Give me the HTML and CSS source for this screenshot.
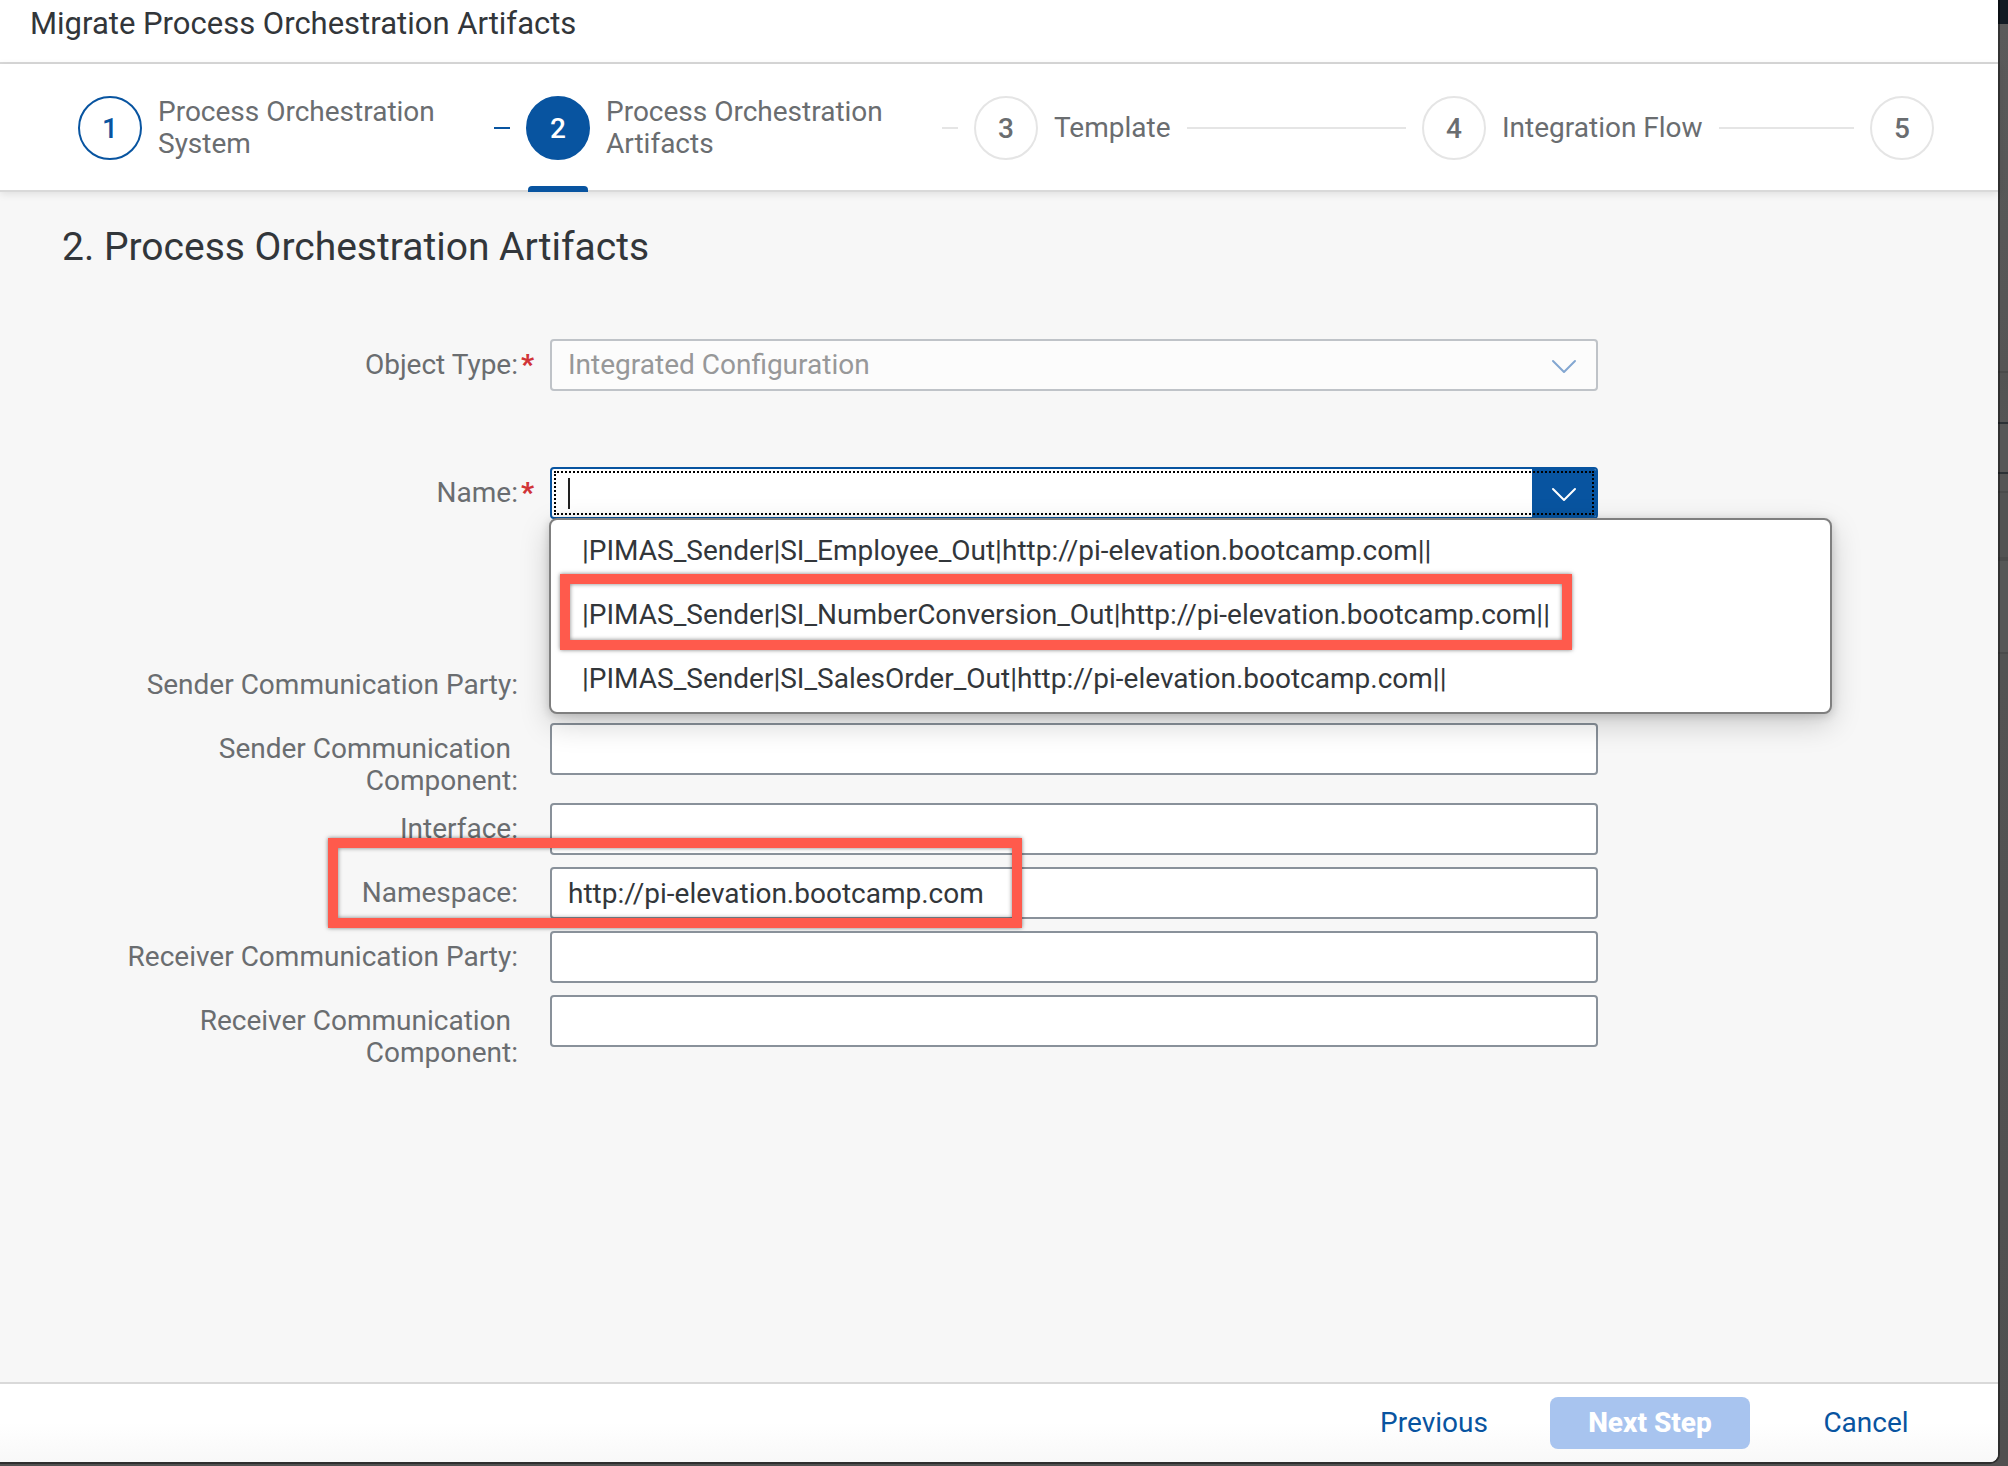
FILE: index.html
```html
<!DOCTYPE html>
<html lang="en">
<head>
<meta charset="utf-8">
<title>Migrate Process Orchestration Artifacts</title>
<link rel="stylesheet" href="styles.css">
</head>
<body>
<div class="dialog" role="dialog" aria-labelledby="dialog-title">
  <header class="dialog-header">
    <h1 class="dialog-title" id="dialog-title">Migrate Process Orchestration Artifacts</h1>
  </header>

  <nav class="wizard-nav" aria-label="Wizard steps">
    <ol class="steps">
      <li class="step done">
        <button class="step-button" type="button"><span class="circle">1</span><span class="step-label">Process Orchestration System</span></button>
        <span class="line"></span>
      </li>
      <li class="step current" aria-current="step">
        <button class="step-button" type="button"><span class="circle">2</span><span class="step-label">Process Orchestration Artifacts</span></button>
        <span class="line"></span>
      </li>
      <li class="step">
        <button class="step-button" type="button"><span class="circle">3</span><span class="step-label">Template</span></button>
        <span class="line"></span>
      </li>
      <li class="step">
        <button class="step-button" type="button"><span class="circle">4</span><span class="step-label">Integration Flow</span></button>
        <span class="line"></span>
      </li>
      <li class="step last">
        <button class="step-button" type="button"><span class="circle">5</span></button>
      </li>
    </ol>
  </nav>

  <main class="content">
    <h2 class="section-title">2. Process Orchestration Artifacts</h2>
    <form class="form" id="artifact-form">
      <div class="row row-type">
        <label class="label required" for="object-type">Object Type:</label>
        <div class="field">
          <select class="input select" id="object-type" disabled>
            <option>Integrated Configuration</option>
          </select>
          <svg class="select-arrow" width="26" height="16" viewBox="0 0 26 16" aria-hidden="true"><path d="M2 2L13 13L24 2" fill="none" stroke="#83a7d1" stroke-width="2" stroke-linecap="round" stroke-linejoin="round"/></svg>
        </div>
      </div>

      <div class="row row-name">
        <label class="label required" for="name">Name:</label>
        <div class="field">
          <div class="combobox">
            <input class="combobox-input" id="name" type="text" role="combobox" aria-expanded="true" aria-controls="name-list">
            <span class="caret"></span>
            <button class="combobox-button" type="button" aria-label="Show options">
              <svg width="26" height="16" viewBox="0 0 26 16" aria-hidden="true"><path d="M2 2L13 13L24 2" fill="none" stroke="#fff" stroke-width="2" stroke-linecap="round" stroke-linejoin="round"/></svg>
            </button>
          </div>
          <ul class="popover" id="name-list" role="listbox" aria-label="Name">
            <li class="option" role="option">|PIMAS_Sender|SI_Employee_Out|http://pi-elevation.bootcamp.com||</li>
            <li class="option" role="option">|PIMAS_Sender|SI_NumberConversion_Out|http://pi-elevation.bootcamp.com||<span class="mark mark-option"></span></li>
            <li class="option" role="option">|PIMAS_Sender|SI_SalesOrder_Out|http://pi-elevation.bootcamp.com||</li>
          </ul>
        </div>
      </div>

      <div class="row">
        <label class="label" for="sender-party">Sender Communication Party:</label>
        <div class="field"><input class="input" id="sender-party" type="text"></div>
      </div>
      <div class="row">
        <label class="label" for="sender-component">Sender Communication&nbsp;<br>Component:</label>
        <div class="field"><input class="input" id="sender-component" type="text"></div>
      </div>
      <div class="row">
        <label class="label" for="interface">Interface:</label>
        <div class="field"><input class="input" id="interface" type="text"></div>
      </div>
      <div class="row">
        <label class="label" for="namespace">Namespace:</label>
        <div class="field"><input class="input" id="namespace" type="text" value="http://pi-elevation.bootcamp.com"></div>
        <span class="mark mark-namespace"></span>
      </div>
      <div class="row">
        <label class="label" for="receiver-party">Receiver Communication Party:</label>
        <div class="field"><input class="input" id="receiver-party" type="text"></div>
      </div>
      <div class="row">
        <label class="label" for="receiver-component">Receiver Communication&nbsp;<br>Component:</label>
        <div class="field"><input class="input" id="receiver-component" type="text"></div>
      </div>
    </form>
  </main>

  <footer class="dialog-footer">
    <button class="button" type="button">Previous</button>
    <button class="button primary" type="submit" form="artifact-form" disabled>Next Step</button>
    <button class="button" type="button">Cancel</button>
  </footer>
</div>
</body>
</html>
```
FILE: styles.css
```css
:root {
  --blue: #0854a0;
  --text: #32363a;
  --label: #6a6d70;
  --rule: #d9d9d9;
  --mark: #ff5a4c;
}

* {
  box-sizing: border-box;
}

/* Dimmed application page behind the dialog */
body {
  margin: 0;
  background-color: #575757;
  background-image: linear-gradient(
    #121b24 24px, #5a5a5a 24px, #555 371px,
    #4a4a4a 371px, #4a4a4a 373px, #535353 373px, #555 422px,
    #2c3135 422px, #2c3135 424px, #575757 424px, #575757 472px,
    #2c3135 472px, #2c3135 474px, #555 474px, #555 491px,
    #4b4b4b 491px, #4b4b4b 493px, #535353 493px, #535353 557px,
    #4c4c4c 557px, #4c4c4c 561px, #575757 561px, #575757 652px,
    #4b4b4b 652px, #4b4b4b 654px, #535353 654px, #505050);
  color: var(--text);
  font-family: Roboto, "Open Sans", sans-serif;
  font-size: 28px;
  line-height: 32px;
}

button,
input,
select {
  font: inherit;
  color: inherit;
}

.dialog {
  display: flex;
  flex-direction: column;
  min-height: calc(100vh - 4px);
  margin: 0 10px 4px 0;
  background: #f7f7f7;
  border-radius: 0 0 8px 0;
  box-shadow: 0 0 0 2px rgba(0, 0, 0, 0.42);
}

.dialog-header {
  padding: 8px 30px 22px;
  background: #fff;
  border-bottom: 2px solid var(--rule);
}

.dialog-title {
  margin: 0;
  font-size: 31px;
  font-weight: 400;
  line-height: 32px;
}

/* Wizard progress */
.wizard-nav {
  padding: 32px 64px 30px 78px;
  background: #fff;
  border-bottom: 2px solid var(--rule);
  box-shadow: 0 2px 8px rgba(0, 0, 0, 0.1);
}

.steps {
  display: flex;
  margin: 0;
  padding: 0;
  list-style: none;
}

.step {
  display: flex;
  flex: 1 1 0;
  gap: 16px;
  align-items: center;
  min-width: 0;
  padding-right: 16px;
  color: var(--label);
}

.step.last {
  flex: none;
  padding-right: 0;
}

.step-button {
  display: flex;
  gap: 16px;
  align-items: center;
  min-width: 0;
  padding: 0;
  border: 0;
  background: none;
  text-align: left;
}

.circle {
  position: relative;
  display: flex;
  flex: none;
  align-items: center;
  justify-content: center;
  width: 64px;
  height: 64px;
  padding-top: 2px;
  border: 2px solid #e5e5e5;
  border-radius: 50%;
  font-weight: 500;
}

.done .circle {
  border-color: var(--blue);
  color: var(--blue);
}

.current .circle {
  border-color: var(--blue);
  background: var(--blue);
  color: #fff;
}

.current .circle::after {
  content: "";
  position: absolute;
  bottom: -34px;
  left: 0;
  width: 60px;
  height: 6px;
  border-radius: 4px 4px 0 0;
  background: var(--blue);
}

.line {
  flex: 1 0 16px;
  height: 2px;
  background: #e5e5e5;
}

.done .line {
  background: var(--blue);
}

/* Form */
.content {
  flex: 1;
  padding: 31px 62px 32px;
}

.section-title {
  margin: 0 0 62px;
  font-size: 39px;
  font-weight: 400;
  line-height: 48px;
}

.row {
  position: relative;
  display: grid;
  grid-template-columns: 488fr 1048fr 338fr;
  align-items: start;
  padding-top: 6px;
}

.row-type {
  margin-bottom: 64px;
}

.row-name {
  z-index: 1;
  margin-bottom: 128px;
}

.label {
  padding: 10px 32px 0 0;
  color: var(--label);
  text-align: right;
}

.label.required {
  padding-right: 16px;
}

.label.required::after {
  content: "*";
  display: inline-block;
  width: 16px;
  color: #d13438;
  font-weight: 900;
  text-align: right;
}

.field {
  position: relative;
  padding-bottom: 6px;
}

.input {
  display: block;
  width: 100%;
  height: 52px;
  padding: 0 16px;
  border: 2px solid #89919a;
  border-radius: 4px;
  background: #fff;
}

.select {
  appearance: none;
  border-color: #bfc3c8;
  background: #fcfcfc;
  color: #979899;
  opacity: 1;
}

.select-arrow {
  position: absolute;
  top: 20px;
  right: 21px;
}

.combobox {
  position: relative;
  display: flex;
  height: 52px;
  overflow: hidden;
  border: 2px solid var(--blue);
  border-radius: 4px;
  background: #fff;
}

.combobox::after {
  content: "";
  position: absolute;
  inset: 2px;
  border: 2px dotted #000;
  pointer-events: none;
}

.combobox-input {
  flex: 1;
  min-width: 0;
  padding: 0 16px;
  border: 0;
  outline: 0;
  background: none;
}

.combobox-button {
  display: flex;
  align-items: center;
  justify-content: center;
  width: 64px;
  padding: 4px 0 0;
  border: 0;
  background: var(--blue);
}

.caret {
  position: absolute;
  top: 9px;
  left: 16px;
  width: 2px;
  height: 31px;
  background: #222;
}

.popover {
  position: absolute;
  top: 51px;
  left: -1px;
  width: calc(100% + 235px);
  margin: 0;
  padding: 0;
  border: 2px solid #7f7f7f;
  border-radius: 8px;
  background: #fff;
  box-shadow: 0 10px 30px rgba(0, 0, 0, 0.18), 0 2px 10px rgba(0, 0, 0, 0.16);
  list-style: none;
}

.option {
  position: relative;
  padding: 15px 31px 17px;
  white-space: nowrap;
}

/* Red callout frames */
.mark {
  position: absolute;
  border: 10px solid var(--mark);
  box-shadow: 0 0 4px rgba(0, 0, 0, 0.5), inset 0 0 4px rgba(0, 0, 0, 0.5);
  pointer-events: none;
}

.mark-option {
  top: -10px;
  left: 9px;
  width: 1012px;
  height: 76px;
}

.mark-namespace {
  top: -23px;
  left: 266px;
  width: 694px;
  height: 90px;
}

/* Footer */
.dialog-footer {
  display: flex;
  gap: 16px;
  justify-content: flex-end;
  padding: 13px 32px;
  border-top: 2px solid var(--rule);
  border-radius: 0 0 8px 0;
  background: linear-gradient(#fff 50%, #f8f8f8);
}

.button {
  min-width: 200px;
  height: 52px;
  padding: 0 22px;
  border: 0;
  border-radius: 8px;
  background: none;
  color: var(--blue);
}

.button.primary {
  background: #a8c4ef;
  color: #fff;
  font-weight: 800;
}
```
